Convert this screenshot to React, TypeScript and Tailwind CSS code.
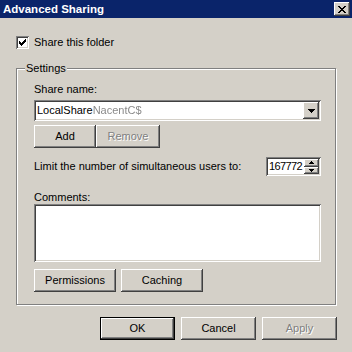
import React from 'react';

const raised = 'shadow-[inset_-1px_-1px_#404040,inset_1px_1px_#ffffff,inset_-2px_-2px_#808080]';
const sunken = 'shadow-[inset_1px_1px_#808080,inset_-1px_-1px_#ffffff,inset_2px_2px_#404040,inset_-2px_-2px_#d4d0c8]';

type BtnProps = { children: React.ReactNode; disabled?: boolean; primary?: boolean; className?: string };

const Btn = ({ children, disabled, primary, className = '' }: BtnProps) => (
  <div
    className={`flex items-center justify-center h-[23px] bg-[#d4d0c8] text-[11px] leading-[13px] ${raised} ${
      primary ? 'border border-black' : ''
    } ${disabled ? 'text-[#808080] [text-shadow:1px_1px_#ffffff]' : 'text-black'} ${className}`}
  >
    {children}
  </div>
);

// pixel glyph helper: rows of [x, width]
const Pix = ({ rows, w, h }: { rows: [number, number][][]; w: number; h: number }) => (
  <svg width={w} height={h} viewBox={`0 0 ${w} ${h}`} shapeRendering="crispEdges">
    {rows.map((row, y) => row.map(([x, len], i) => <rect key={`${y}-${i}`} x={x} y={y} width={len} height={1} fill="#000" />))}
  </svg>
);

const CloseGlyph = () => (
  <Pix
    w={8}
    h={7}
    rows={[
      [[0, 2], [6, 2]],
      [[1, 2], [5, 2]],
      [[2, 4]],
      [[3, 2]],
      [[2, 4]],
      [[1, 2], [5, 2]],
      [[0, 2], [6, 2]],
    ]}
  />
);

const DownArrow = () => <Pix w={7} h={4} rows={[[[0, 7]], [[1, 5]], [[2, 3]], [[3, 1]]]} />;
const SpinUp = () => <Pix w={5} h={3} rows={[[[2, 1]], [[1, 3]], [[0, 5]]]} />;
const SpinDown = () => <Pix w={5} h={3} rows={[[[0, 5]], [[1, 3]], [[2, 1]]]} />;

const Check = () => (
  <Pix
    w={7}
    h={7}
    rows={[
      [[6, 1]],
      [[5, 2]],
      [[0, 1], [4, 3]],
      [[0, 2], [3, 3]],
      [[0, 5]],
      [[1, 3]],
      [[2, 1]],
    ]}
  />
);

export default function App() {
  return (
    <div className="w-[352px] h-[352px] bg-[#d4d0c8] flex flex-col font-['Liberation_Sans',Arial,sans-serif] text-[11px] leading-[13px] text-black overflow-hidden">
      {/* title bar */}
      <div className="h-[18px] bg-[#0a246a] flex items-center justify-between pl-[3px] pr-[2px]">
        <span className="text-white font-bold text-[11.5px]">Advanced Sharing</span>
        <div className={`w-[16px] h-[14px] bg-[#d4d0c8] flex items-center justify-center ${raised}`}>
          <CloseGlyph />
        </div>
      </div>

      {/* share checkbox */}
      <div className="mt-[18px] ml-[16px] flex items-center gap-[5px] h-[13px]">
        <div className={`w-[13px] h-[13px] bg-white flex items-center justify-center ${sunken}`}>
          <Check />
        </div>
        <span>Share this folder</span>
      </div>

      {/* settings group */}
      <div className="relative mt-[19px] ml-[16px] w-[320px] h-[237px] border border-[#808080] shadow-[inset_1px_1px_#ffffff,1px_1px_#ffffff] flex flex-col pl-[17px] pr-[14px] pt-[14px]">
        <span className="absolute -top-[7px] left-[8px] px-[1px] bg-[#d4d0c8]">Settings</span>

        <span className="h-[13px]">Share name:</span>

        <div className={`mt-[4px] h-[21px] bg-white flex items-center pl-[3px] pr-[2px] ${sunken}`}>
          <span className="flex-1">
            LocalShare<span className="text-[#8a8a8a] blur-[0.6px]">NacentC$</span>
          </span>
          <div className={`w-[16px] h-[17px] bg-[#d4d0c8] flex items-center justify-center ${raised}`}>
            <DownArrow />
          </div>
        </div>

        <div className="mt-[4px] flex">
          <Btn className="w-[62px]">Add</Btn>
          <Btn className="w-[64px]" disabled>
            Remove
          </Btn>
        </div>

        <div className="mt-[9px] h-[19px] flex items-center justify-between">
          <span>Limit the number of simultaneous users to:</span>
          <div className={`w-[55px] h-[19px] bg-white flex items-center pl-[3px] pr-[2px] ${sunken}`}>
            <span className="flex-1 whitespace-nowrap tracking-[-0.6px]">167772</span>
            <div className="flex flex-col w-[15px] h-[15px]">
              <div className={`flex-1 bg-[#d4d0c8] flex items-center justify-center ${raised}`}>
                <SpinUp />
              </div>
              <div className={`flex-1 bg-[#d4d0c8] flex items-center justify-center ${raised}`}>
                <SpinDown />
              </div>
            </div>
          </div>
        </div>

        <span className="mt-[15px] h-[13px]">Comments:</span>
        <div className={`h-[58px] bg-white ${sunken}`} />

        <div className="mt-[7px] flex gap-[5px]">
          <Btn className="w-[82px]">Permissions</Btn>
          <Btn className="w-[82px]">Caching</Btn>
        </div>
      </div>

      {/* dialog buttons */}
      <div className="mt-[12px] flex justify-end gap-[6px] pr-[15px]">
        <Btn className="w-[75px]" primary>
          OK
        </Btn>
        <Btn className="w-[75px]">Cancel</Btn>
        <Btn className="w-[75px]" disabled>
          Apply
        </Btn>
      </div>
    </div>
  );
}
